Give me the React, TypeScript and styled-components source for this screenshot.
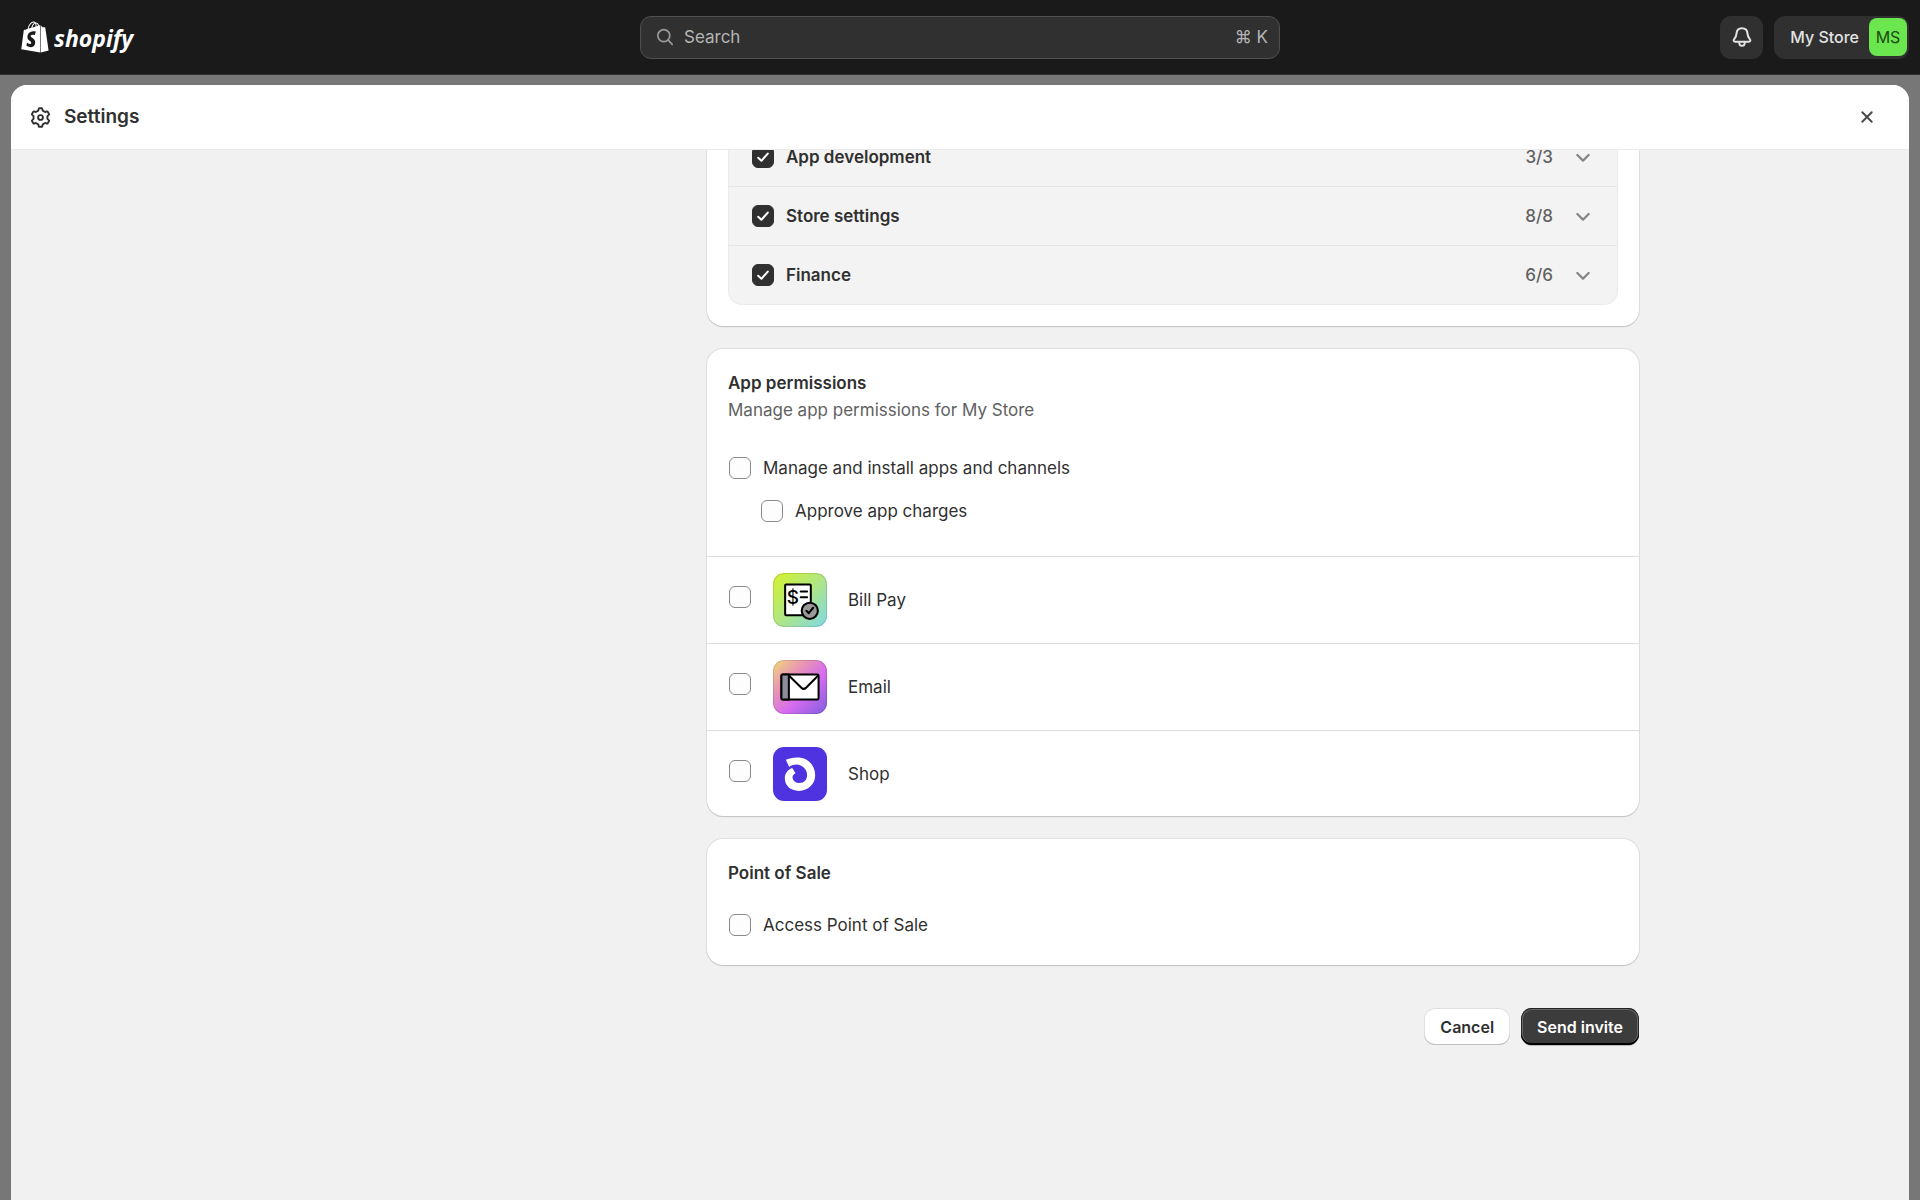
import React, { useId, useState } from "react";
import styled, { createGlobalStyle, css } from "styled-components";
import { FaShopify } from "react-icons/fa";

const GlobalStyle = createGlobalStyle`
  *, *::before, *::after { box-sizing: border-box; }
  html, body, #root { height: 100%; }
  body {
    margin: 0;
    overflow: hidden;
    background: #777777;
    color: #303030;
    font: 400 17px/28px Inter, "Liberation Sans", sans-serif;
    font-optical-sizing: none;
  }
  button, input { font: inherit; color: inherit; font-optical-sizing: none; }
  h1, h2, p { margin: 0; }
`;

const Shell = styled.div`
  display: flex;
  flex-direction: column;
  height: 100%;
`;

const TopBar = styled.header`
  display: grid;
  grid-template-columns: 1fr minmax(0, 640px) 1fr;
  align-items: center;
  height: 75px;
  flex: none;
  padding: 0 11px;
  background: #1a1a1a;
  border-bottom: 1px solid #303030;
`;

const Brand = styled.a`
  display: flex;
  align-items: center;
  gap: 5px;
  padding-left: 10px;
  color: #ffffff;
  text-decoration: none;
`;

const BagLogo = styled(FaShopify)`
  width: 28px;
  height: 32px;
`;

const Wordmark = styled.span`
  padding-top: 2px;
  font: italic 700 23px/32px "Open Sans", "Noto Sans", sans-serif;
`;

const SearchBox = styled.label`
  display: flex;
  align-items: center;
  gap: 10px;
  height: 43px;
  padding: 0 11px 0 15px;
  border: 1px solid #505050;
  border-radius: 11px;
  background: #303030;
  color: #b5b5b5;
`;

const SearchInput = styled.input`
  flex: 1;
  min-width: 0;
  padding: 0;
  border: 0;
  outline: 0;
  background: none;
  &::placeholder { color: #b5b5b5; opacity: 1; }
`;

const Shortcut = styled.kbd`
  font: inherit;
`;

const Actions = styled.div`
  display: flex;
  justify-content: flex-end;
  gap: 11px;
`;

const barButton = css`
  display: flex;
  align-items: center;
  height: 43px;
  border: 0;
  border-radius: 11px;
  background: #303030;
  color: #e3e3e3;
`;

const BellButton = styled.button`
  ${barButton}
  justify-content: center;
  width: 43px;
  padding: 0;
`;

const StoreButton = styled.button`
  ${barButton}
  gap: 10px;
  padding: 0 2px 0 16px;
  font-size: 16px;
  font-weight: 500;
`;

const Avatar = styled.span`
  display: grid;
  place-items: center;
  width: 38px;
  height: 38px;
  border-radius: 8px;
  background: #6be64f;
  color: #1d4a12;
  font-weight: 400;
`;

const Sheet = styled.main`
  display: flex;
  flex: 1;
  flex-direction: column;
  min-height: 0;
  margin: 10px 11px 0;
  overflow: hidden;
  border-radius: 16px 16px 0 0;
  background: #f1f1f1;
`;

const SheetHeader = styled.div`
  display: flex;
  flex: none;
  align-items: center;
  gap: 13px;
  height: 65px;
  padding: 0 31px 0 19px;
  border-bottom: 1px solid #ebebeb;
  background: #ffffff;
`;

const SheetTitle = styled.h1`
  flex: 1;
  font-size: 19px;
  line-height: 28px;
  font-weight: 600;
`;

const IconButton = styled.button`
  display: grid;
  place-items: center;
  width: 22px;
  height: 22px;
  padding: 0;
  border: 0;
  background: none;
  color: #4a4a4a;
`;

const Scroller = styled.div`
  flex: 1;
  min-height: 0;
  overflow: hidden;
`;

const Page = styled.div`
  display: grid;
  grid-template-columns: 426px minmax(0, 1fr);
  max-width: 1358px;
  margin: -23px auto 0;
`;

const Column = styled.form`
  display: flex;
  grid-column: 2;
  flex-direction: column;
  gap: 23px;
`;

const Card = styled.section<{ $continued?: boolean }>`
  overflow: hidden;
  border-radius: ${(p) => (p.$continued ? "0 0 16px 16px" : "16px")};
  background: #ffffff;
  box-shadow: 0 1px 1px #c4c4c4, 0 0 0 1px #e0e0e0;
`;

const CardBody = styled.div<{ $gap?: number }>`
  display: flex;
  flex-direction: column;
  gap: ${(p) => p.$gap ?? 0}px;
  padding: 20px 21px 26px;
`;

const CardTitle = styled.h2`
  font-size: 17px;
  line-height: 28px;
  font-weight: 600;
`;

const Muted = styled.p`
  line-height: 27px;
  color: #616161;
`;

const GroupWrap = styled.div`
  padding: 0 21px 21px;
`;

const GroupList = styled.div`
  border: 1px solid #ebebeb;
  border-top: 0;
  border-radius: 0 0 14px 14px;
  background: #f3f3f3;
`;

const GroupRow = styled.div`
  display: flex;
  align-items: center;
  gap: 19px;
  height: 59px;
  padding: 0 23px;
  border-top: 1px solid #e6e6e6;
`;

const Count = styled.span`
  margin-left: auto;
  color: #616161;
  font-weight: 500;
`;

const Field = styled.label<{ $strong?: boolean }>`
  display: flex;
  align-items: center;
  gap: 12px;
  font-weight: ${(p) => (p.$strong ? 600 : 400)};
`;

const Options = styled.div`
  display: flex;
  flex-direction: column;
  gap: 15px;
  padding: 30px 0 5px 1px;
`;

const Nested = styled.div`
  padding-left: 32px;
`;

const BoxFrame = styled.span`
  display: grid;
  flex: none;
  width: 22px;
  height: 22px;
  & > * { grid-area: 1 / 1; }
  & > svg { pointer-events: none; }
`;

const Box = styled.input`
  width: 22px;
  height: 22px;
  margin: 0;
  appearance: none;
  border: 1px solid #8a8a8a;
  border-radius: 6px;
  background: #fdfdfd;
  &:checked { border-color: #303030; background: #303030; }
`;

const AppRow = styled.div`
  display: flex;
  align-items: center;
  height: 87px;
  padding: 0 21px;
  border-top: 1px solid #dedede;
  &:last-child { height: 86px; }
`;

const AppCheck = styled.div`
  padding: 0 22px 6px 1px;
`;

const AppLabel = styled.label`
  display: flex;
  align-items: center;
  gap: 21px;
`;

const AppIcon = styled.svg`
  display: block;
  width: 54px;
  height: 54px;
  border-radius: 11px;
`;

const PosOptions = styled.div`
  padding-left: 1px;
`;

const Footer = styled.div`
  display: flex;
  justify-content: flex-end;
  gap: 11px;
  padding-top: 20px;
`;

const Button = styled.button<{ $primary?: boolean }>`
  height: 37px;
  padding: 0 16px;
  border: 0;
  border-radius: 11px;
  font-size: 16px;
  line-height: 22px;
  font-weight: 600;
  ${(p) =>
    p.$primary
      ? css`
          background: #3c3c3c;
          color: #ffffff;
          box-shadow: inset 0 -2px 0 #000000, inset 0 0 0 1px #262626, inset 0 0 0 2px #666666, 0 1px 0 #bdbdbd;
        `
      : css`
          background: #ffffff;
          box-shadow: inset 0 -1px 0 #bdbdbd, inset 0 0 0 1px #e0e0e0;
        `}
`;

function Checkbox({ id, on = false }: { id: string; on?: boolean }) {
  const [checked, setChecked] = useState(on);
  return (
    <BoxFrame>
      <Box id={id} type="checkbox" checked={checked} onChange={(e) => setChecked(e.target.checked)} />
      {checked && (
        <svg width="22" height="22" viewBox="0 0 22 22" fill="none" stroke="#fff" strokeWidth="2" strokeLinecap="round" strokeLinejoin="round">
          <path d="M6.2 11.8 9.4 14.8 15.8 7.6" />
        </svg>
      )}
    </BoxFrame>
  );
}

function Option({ label }: { label: string }) {
  const id = useId();
  return (
    <Field htmlFor={id}>
      <Checkbox id={id} />
      {label}
    </Field>
  );
}

function Group({ label, count }: { label: string; count: string }) {
  const id = useId();
  return (
    <GroupRow>
      <Field htmlFor={id} $strong>
        <Checkbox id={id} on />
        {label}
      </Field>
      <Count>{count}</Count>
      <IconButton type="button" aria-label={`Expand ${label}`}>
        <svg width="22" height="22" viewBox="0 0 22 22" fill="none" stroke="#858585" strokeWidth="2.2" strokeLinecap="round" strokeLinejoin="round">
          <path d="M5.3 9 11 14.6 16.7 9" />
        </svg>
      </IconButton>
    </GroupRow>
  );
}

function BillPayIcon() {
  return (
    <AppIcon viewBox="0 0 160 160" aria-hidden="true">
      <defs>
        <linearGradient id="bill" x1="0" y1="0" x2="1" y2="1">
          <stop offset="0.1" stopColor="#cdf03c" />
          <stop offset="0.5" stopColor="#b0e683" />
          <stop offset="1" stopColor="#7ed8e8" />
        </linearGradient>
      </defs>
      <rect width="160" height="160" fill="url(#bill)" />
      <rect x="1.5" y="1.5" width="157" height="157" rx="31" fill="none" stroke="#000" strokeOpacity="0.12" strokeWidth="3" />
      <g stroke="#000" strokeWidth="6" strokeLinecap="round" strokeLinejoin="round">
        <rect x="36" y="34" width="76" height="91" rx="3" fill="#fff" />
        <path d="M82 55H101M82 72H101" />
        <circle cx="109" cy="112" r="24" fill="#999" />
        <path d="M99 112 106 119 119 103" fill="none" />
      </g>
      <text x="59" y="91" textAnchor="middle" fontFamily="Inter, sans-serif" fontSize="56" fontWeight="500">$</text>
    </AppIcon>
  );
}

function EmailIcon() {
  return (
    <AppIcon viewBox="0 0 160 160" aria-hidden="true">
      <defs>
        <linearGradient id="mail" x1="0" y1="0" x2="1" y2="1">
          <stop offset="0.05" stopColor="#f0cf84" />
          <stop offset="0.32" stopColor="#e893b4" />
          <stop offset="0.6" stopColor="#d56cf0" />
          <stop offset="0.95" stopColor="#8a5fe0" />
        </linearGradient>
      </defs>
      <rect width="160" height="160" fill="url(#mail)" />
      <rect x="1.5" y="1.5" width="157" height="157" rx="31" fill="none" stroke="#000" strokeOpacity="0.12" strokeWidth="3" />
      <g stroke="#000" strokeWidth="6" strokeLinejoin="round">
        <rect x="25" y="43" width="110" height="74" rx="4" fill="#fff" />
        <path d="M29 43H47V117H29Q25 117 25 113V47Q25 43 29 43Z" fill="#8e8c9c" />
        <path d="M47 46 84 82Q91 89 98 82L134 46" fill="none" />
      </g>
    </AppIcon>
  );
}

function ShopIcon() {
  return (
    <AppIcon viewBox="0 0 160 160" aria-hidden="true">
      <rect width="160" height="160" fill="#4f32e0" />
      <path
        fill="#fff"
        d="M38 38C52 31 80 27 98 37C115 46 125 64 125 84C125 110 104 130 77 130C51 130 35 114 35 92C35 78 43 68 57 62L67 78C60 81 57 87 58 92C60 102 68 107 78 107C92 107 101 97 101 84C101 66 87 53 70 52C61 52 55 54 48 59Z"
      />
    </AppIcon>
  );
}

function AppPermission({ label, icon }: { label: string; icon: React.ReactNode }) {
  const id = useId();
  return (
    <AppRow>
      <AppCheck>
        <Checkbox id={id} />
      </AppCheck>
      <AppLabel htmlFor={id}>
        {icon}
        {label}
      </AppLabel>
    </AppRow>
  );
}

export default function App() {
  return (
    <>
      <GlobalStyle />
      <Shell>
        <TopBar>
          <Brand href="#">
            <BagLogo aria-hidden="true" />
            <Wordmark>shopify</Wordmark>
          </Brand>
          <SearchBox>
            <svg width="18" height="18" viewBox="0 0 18 18" fill="none" stroke="#9a9a9a" strokeWidth="1.7" strokeLinecap="round" aria-hidden="true">
              <circle cx="7.8" cy="7.6" r="6" />
              <path d="M12.2 12.2 16.2 16.3" />
            </svg>
            <SearchInput type="text" placeholder="Search" aria-label="Search" />
            <Shortcut>⌘ K</Shortcut>
          </SearchBox>
          <Actions>
            <BellButton type="button" aria-label="Notifications">
              <svg width="22" height="22" viewBox="0 0 22 22" fill="none" stroke="#e3e3e3" strokeWidth="2" strokeLinejoin="round">
                <path d="M11 2.2C7.6 2.2 5.7 4.7 5.5 7.6C5.3 10.5 4.8 11.3 3.2 13.1C2.1 14.4 2.7 15.7 4.2 15.7H17.8C19.3 15.7 19.9 14.4 18.8 13.1C17.2 11.3 16.7 10.5 16.5 7.6C16.3 4.7 14.4 2.2 11 2.2Z" />
                <path d="M8.2 15.9C8.2 18.4 9.2 19.8 11 19.8C12.8 19.8 13.8 18.4 13.8 15.9" />
              </svg>
            </BellButton>
            <StoreButton type="button">
              My Store
              <Avatar>MS</Avatar>
            </StoreButton>
          </Actions>
        </TopBar>

        <Sheet>
          <SheetHeader>
            <svg width="21" height="21" viewBox="0 0 20 20" fill="none" stroke="#303030" strokeWidth="1.8" strokeLinejoin="round" aria-hidden="true">
              <circle cx="10" cy="10" r="2.3" />
              <path d="M8.9 1.2H11.1Q11.7 1.2 11.8 1.9L12.1 3.5 14.4 4.8 16 4.2Q16.6 4 16.9 4.5L18.1 6.6Q18.4 7.1 17.9 7.5L16.6 8.7V11.3L17.9 12.5Q18.4 12.9 18.1 13.4L16.9 15.5Q16.6 16 16 15.8L14.4 15.2 12.1 16.5 11.8 18.1Q11.7 18.8 11.1 18.8H8.9Q8.3 18.8 8.2 18.1L7.9 16.5 5.6 15.2 4 15.8Q3.4 16 3.1 15.5L1.9 13.4Q1.6 12.9 2.1 12.5L3.4 11.3V8.7L2.1 7.5Q1.6 7.1 1.9 6.6L3.1 4.5Q3.4 4 4 4.2L5.6 4.8 7.9 3.5 8.2 1.9Q8.3 1.2 8.9 1.2Z" />
            </svg>
            <SheetTitle>Settings</SheetTitle>
            <IconButton type="button" aria-label="Close">
              <svg width="22" height="22" viewBox="0 0 22 22" fill="none" stroke="#4a4a4a" strokeWidth="2" strokeLinecap="round">
                <path d="M6.3 6.3 15.7 15.7M15.7 6.3 6.3 15.7" />
              </svg>
            </IconButton>
          </SheetHeader>

          <Scroller>
            <Page>
              <Column onSubmit={(e) => e.preventDefault()}>
                <Card $continued>
                  <GroupWrap>
                    <GroupList>
                      <Group label="App development" count="3/3" />
                      <Group label="Store settings" count="8/8" />
                      <Group label="Finance" count="6/6" />
                    </GroupList>
                  </GroupWrap>
                </Card>

                <Card>
                  <CardBody>
                    <CardTitle>App permissions</CardTitle>
                    <Muted>Manage app permissions for My Store</Muted>
                    <Options>
                      <Option label="Manage and install apps and channels" />
                      <Nested>
                        <Option label="Approve app charges" />
                      </Nested>
                    </Options>
                  </CardBody>
                  <AppPermission label="Bill Pay" icon={<BillPayIcon />} />
                  <AppPermission label="Email" icon={<EmailIcon />} />
                  <AppPermission label="Shop" icon={<ShopIcon />} />
                </Card>

                <Card>
                  <CardBody $gap={24}>
                    <CardTitle>Point of Sale</CardTitle>
                    <PosOptions>
                      <Option label="Access Point of Sale" />
                    </PosOptions>
                  </CardBody>
                </Card>

                <Footer>
                  <Button type="button">Cancel</Button>
                  <Button type="submit" $primary>
                    Send invite
                  </Button>
                </Footer>
              </Column>
            </Page>
          </Scroller>
        </Sheet>
      </Shell>
    </>
  );
}
